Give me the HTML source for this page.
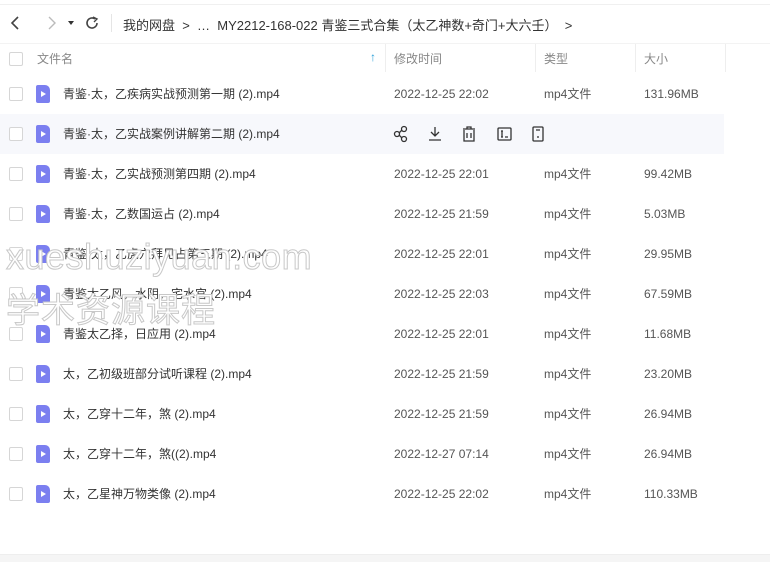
<!DOCTYPE html><html><head><meta charset="utf-8"><style>
body{margin:0;width:770px;height:561px;background:#fff;font-family:"Liberation Sans","Noto Sans CJK SC",sans-serif;position:relative;overflow:hidden;color:#333}
.a{position:absolute;white-space:nowrap}
.top{position:absolute;left:0;top:0;width:770px;height:4px;border-bottom:1px solid #f0f0f0}
.row{position:absolute;left:0;width:724px;height:40px;font-size:12px;line-height:16px}
.cb{position:absolute;left:9px;top:13px;width:12px;height:12px;border:1px solid #d6d6d6;border-radius:2px;background:#fff}
.ic{position:absolute;left:36px;top:11px;width:14px;height:18px;background:#7b7ff0;border-radius:2px 5px 2px 2px}
.ic:after{content:"";position:absolute;left:5px;top:6px;border-left:5px solid #fff;border-top:3px solid transparent;border-bottom:3px solid transparent}
.n,.d,.t,.s{position:absolute;top:12px;height:16px;line-height:16px}
.n{left:63px;color:#333}
.d{left:394px;color:#555}
.t{left:544px;color:#555}
.s{left:644px;color:#555}
.hd{font-size:12px;color:#888;line-height:16px}
.sep{position:absolute;top:44px;width:1px;height:28px;background:#eee}
.wm{position:absolute;color:#fff;-webkit-text-stroke:1px #c8c8c8;font-family:"Liberation Sans","Noto Sans CJK SC",sans-serif;white-space:nowrap}
</style></head><body>
<div class="top"></div>
<svg class="a" style="left:8px;top:14px" width="100" height="18" viewBox="0 0 100 18">
<path d="M10 3 L4 9 L10 15" fill="none" stroke="#444" stroke-width="1.6"/>
<path d="M41 3 L47 9 L41 15" fill="none" stroke="#bbb" stroke-width="1.4"/>
<path d="M60 7 L66 7 L63 11 Z" fill="#333"/>
<path d="M87 5 A5 5 0 1 0 89 9" fill="none" stroke="#444" stroke-width="1.6"/><path d="M85 3 L89 5 L86 8" fill="none" stroke="#444" stroke-width="1.4"/>
</svg>
<div class="a" style="left:111px;top:14px;width:1px;height:18px;background:#e5e5e5"></div>
<div class="a" style="left:123px;top:15px;font-size:13px;color:#333">我的网盘 &nbsp;&gt;&nbsp; … &nbsp;MY2212-168-022 青鉴三式合集（太乙神数+奇门+大六壬） &nbsp;&gt;</div>
<div class="a" style="left:0;top:43px;width:770px;height:1px;background:#f3f3f3"></div>
<div class="cb" style="top:52px"></div>
<div class="a hd" style="left:37px;top:51px">文件名</div>
<div class="a" style="left:370px;top:50px;color:#2a9fd8;font-size:12px;font-weight:bold">↑</div>
<div class="sep" style="left:385px"></div><div class="sep" style="left:535px"></div><div class="sep" style="left:635px"></div><div class="sep" style="left:725px"></div>
<div class="a hd" style="left:394px;top:51px">修改时间</div>
<div class="a hd" style="left:544px;top:51px">类型</div>
<div class="a hd" style="left:644px;top:51px">大小</div>
<div class="row" style="top:74px"><div class="cb"></div><div class="ic"></div><div class="n">青鉴·太，乙疾病实战预测第一期 (2).mp4</div><div class="d">2022-12-25 22:02</div><div class="t">mp4文件</div><div class="s">131.96MB</div></div>
<div class="row" style="top:114px;background:#f7f8fc"><div class="cb"></div><div class="ic"></div><div class="n">青鉴·太，乙实战案例讲解第二期 (2).mp4</div>
<svg class="a" style="left:393px;top:11px" width="160" height="18" viewBox="0 0 160 18" fill="none" stroke="#333" stroke-width="1.3">
<circle cx="4" cy="9" r="2.5"/><circle cx="11" cy="4" r="2.5"/><circle cx="11" cy="14" r="2.5"/><path d="M6 8 L9 5 M6 10 L9 13"/>
<path d="M42 2 V11 M38 7 L42 11 L46 7 M36 15 H48"/>
<path d="M70 4 H82 M74 4 V2 H78 V4 M71 5 V16 H81 V5 M74 8 V13 M78 8 V13"/>
<rect x="105" y="3" width="13" height="12" rx="1"/><path d="M109 6 V12 M108 6 H110 M108 12 H110 M112 12 H115"/>
<rect x="140" y="2" width="10" height="14" rx="1"/><path d="M143 5 H147 M145 11 V13"/>
</svg></div>
<div class="row" style="top:154px"><div class="cb"></div><div class="ic"></div><div class="n">青鉴·太，乙实战预测第四期 (2).mp4</div><div class="d">2022-12-25 22:01</div><div class="t">mp4文件</div><div class="s">99.42MB</div></div>
<div class="row" style="top:194px"><div class="cb"></div><div class="ic"></div><div class="n">青鉴·太，乙数国运占 (2).mp4</div><div class="d">2022-12-25 21:59</div><div class="t">mp4文件</div><div class="s">5.03MB</div></div>
<div class="row" style="top:234px"><div class="cb"></div><div class="ic"></div><div class="n">青鉴·太，乙虎穴拜见占第三期 (2).mp4</div><div class="d">2022-12-25 22:01</div><div class="t">mp4文件</div><div class="s">29.95MB</div></div>
<div class="row" style="top:274px"><div class="cb"></div><div class="ic"></div><div class="n">青鉴太乙风，水阴，宅水宫 (2).mp4</div><div class="d">2022-12-25 22:03</div><div class="t">mp4文件</div><div class="s">67.59MB</div></div>
<div class="row" style="top:314px"><div class="cb"></div><div class="ic"></div><div class="n">青鉴太乙择，日应用 (2).mp4</div><div class="d">2022-12-25 22:01</div><div class="t">mp4文件</div><div class="s">11.68MB</div></div>
<div class="row" style="top:354px"><div class="cb"></div><div class="ic"></div><div class="n">太，乙初级班部分试听课程 (2).mp4</div><div class="d">2022-12-25 21:59</div><div class="t">mp4文件</div><div class="s">23.20MB</div></div>
<div class="row" style="top:394px"><div class="cb"></div><div class="ic"></div><div class="n">太，乙穿十二年，煞 (2).mp4</div><div class="d">2022-12-25 21:59</div><div class="t">mp4文件</div><div class="s">26.94MB</div></div>
<div class="row" style="top:434px"><div class="cb"></div><div class="ic"></div><div class="n">太，乙穿十二年，煞((2).mp4</div><div class="d">2022-12-27 07:14</div><div class="t">mp4文件</div><div class="s">26.94MB</div></div>
<div class="row" style="top:474px"><div class="cb"></div><div class="ic"></div><div class="n">太，乙星神万物类像 (2).mp4</div><div class="d">2022-12-25 22:02</div><div class="t">mp4文件</div><div class="s">110.33MB</div></div>
<div class="a" style="left:0;top:554px;width:770px;height:7px;background:#f5f5f5;border-top:1px solid #eee"></div>
<div class="wm" style="left:6px;top:236px;font-size:36px;letter-spacing:0.5px">xueshuziyuan.com</div>
<div class="wm" style="left:6px;top:283px;font-size:34px;letter-spacing:1px">学术资源课程</div>
</body></html>
